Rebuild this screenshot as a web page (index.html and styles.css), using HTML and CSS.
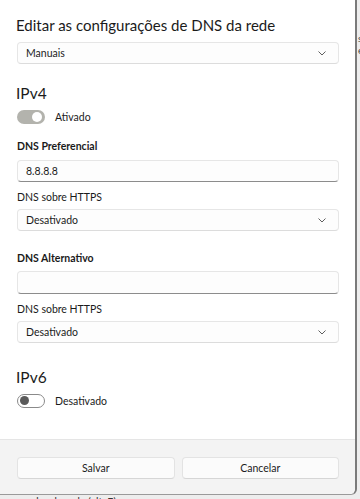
FILE: index.html
```html
<!DOCTYPE html>
<html lang="pt">
<head>
    <meta charset="UTF-8">
    <meta name="viewport" content="width=device-width, initial-scale=1.0">
    <title>Editar DNS</title>
    <link rel="stylesheet" href="styles.css">
</head>
<body>
<div class="screen">
    <div class="dialog">
        <div class="content">
            <h1>Editar as configurações de DNS da rede</h1>

            <div class="select">
                <span>Manuais</span>
                <svg class="chevron" width="8" height="5" viewBox="0 0 8 5"><path d="M0.5 0.5 L4 4 L7.5 0.5" fill="none" stroke="#5f5f5f" stroke-width="1"/></svg>
            </div>

            <h2>IPv4</h2>
            <div class="toggle-row">
                <span class="toggle on"><span class="knob"></span></span>
                <span>Ativado</span>
            </div>

            <label class="strong">DNS Preferencial</label>
            <div class="field">8.8.8.8</div>

            <label>DNS sobre HTTPS</label>
            <div class="select">
                <span>Desativado</span>
                <svg class="chevron" width="8" height="5" viewBox="0 0 8 5"><path d="M0.5 0.5 L4 4 L7.5 0.5" fill="none" stroke="#5f5f5f" stroke-width="1"/></svg>
            </div>

            <label class="strong gap">DNS Alternativo</label>
            <div class="field"></div>

            <label>DNS sobre HTTPS</label>
            <div class="select">
                <span>Desativado</span>
                <svg class="chevron" width="8" height="5" viewBox="0 0 8 5"><path d="M0.5 0.5 L4 4 L7.5 0.5" fill="none" stroke="#5f5f5f" stroke-width="1"/></svg>
            </div>

            <h2 class="v6">IPv6</h2>
            <div class="toggle-row">
                <span class="toggle off"><span class="knob"></span></span>
                <span>Desativado</span>
            </div>
        </div>

        <div class="footer">
            <button>Salvar</button>
            <button>Cancelar</button>
        </div>
    </div>
    <div class="side">
        <span>s</span>
        <span>e</span>
    </div>
</div>
<div class="behind">avançadas da rede (alt. E)</div>
</body>
</html>
```

FILE: styles.css
```css
* {
    margin: 0;
    padding: 0;
    box-sizing: border-box;
}

body {
    font-family: Lato, "Noto Sans", sans-serif;
    background-color: #ededed;
    color: #1b1b1b;
    width: 360px;
    height: 499px;
    overflow: hidden;
}

.screen {
    display: flex;
}

.dialog {
    width: 357px;
    height: 495px;
    background-color: #fff;
    border-right: 2px solid #7a7a7a;
    border-bottom: 1px solid #9a9a9a;
    border-bottom-right-radius: 6px;
    display: flex;
    flex-direction: column;
}

.content {
    flex: 1;
    padding: 14px 16px 0 17px;
}

h1 {
    font-size: 15px;
    font-weight: 400;
    line-height: 22px;
    margin-left: -1px;
    margin-bottom: 6px;
}

h2 {
    font-size: 15.5px;
    font-weight: 400;
    line-height: 20px;
    margin-left: -1px;
    margin-top: 19px;
}

h2.v6 {
    margin-top: 24px;
}

.select,
.field {
    height: 22px;
    border: 1px solid #e6e6e6;
    border-radius: 4px;
    background-color: #fdfdfd;
    font-size: 10.5px;
    display: flex;
    align-items: center;
    justify-content: space-between;
    padding: 0 12px 0 8px;
}

.select {
    border-bottom-color: #dcdcdc;
}

.field {
    border-bottom: 1px solid #8c8c8c;
}

.field:empty {
    height: 23px;
}

.chevron {
    display: block;
}

.toggle-row {
    display: flex;
    align-items: center;
    gap: 10px;
    font-size: 10.5px;
    height: 15px;
    margin-top: 6px;
}

.toggle {
    width: 28px;
    height: 14px;
    border-radius: 7px;
    display: flex;
    align-items: center;
    padding: 0 3px;
}

.toggle.on {
    background-color: #b3b3ad;
    justify-content: flex-end;
}

.toggle.on .knob {
    width: 10px;
    height: 10px;
    border-radius: 50%;
    background-color: #fff;
}

.toggle.off {
    border: 1px solid #8a8a8a;
    padding: 0 2px;
}

.toggle.off .knob {
    width: 9px;
    height: 9px;
    border-radius: 50%;
    background-color: #5a5a5a;
}

label {
    display: block;
    font-size: 10.5px;
    line-height: 15px;
    margin: 8px 0 4px;
}

label.strong {
    font-weight: 700;
    margin-top: 15px;
    margin-bottom: 6px;
}

label.gap {
    margin-top: 20px;
    margin-bottom: 5px;
}

.footer {
    height: 55px;
    background-color: #f3f3f3;
    border-top: 1px solid #e5e5e5;
    border-bottom-right-radius: 6px;
    display: flex;
    gap: 7px;
    padding: 17px 16px 0 17px;
}

button {
    flex: 1;
    height: 22px;
    font-family: inherit;
    font-size: 10.5px;
    color: #1b1b1b;
    background-color: #fbfbfb;
    border: 1px solid #e3e3e3;
    border-bottom-color: #d6d6d6;
    border-radius: 4px;
}

.side {
    flex: 1;
    overflow: hidden;
    display: flex;
    flex-direction: column;
    font-size: 10px;
    color: #444;
    padding-top: 32px;
    padding-left: 1px;
    line-height: 12px;
}

.behind {
    font-size: 10.5px;
    line-height: 14px;
    color: #333;
    padding-left: 1px;
    margin-top: 0;
}
```
